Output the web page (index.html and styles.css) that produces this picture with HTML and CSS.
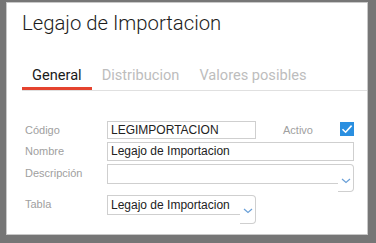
FILE: index.html
```html
<!DOCTYPE html>
<html lang="es">
<head>
    <meta charset="UTF-8">
    <title>Legajo de Importacion</title>
    <link rel="stylesheet" href="styles.css">
</head>
<body>
    <div class="dialog">
        <h1 class="title">Legajo de Importacion</h1>

        <!-- pestañas -->
        <div class="tabs">
            <span class="tab active">General</span>
            <span class="tab">Distribucion</span>
            <span class="tab">Valores posibles</span>
        </div>

        <div class="form">
            <div class="row">
                <label class="label">Código</label>
                <div class="input short">LEGIMPORTACION</div>
                <span class="label activo">Activo</span>
                <span class="check">
                    <svg width="14" height="14" viewBox="0 0 14 14">
                        <path d="M2.5 7.2 L5.6 10.2 L11.6 3.6" fill="none" stroke="#fff" stroke-width="1.6"/>
                    </svg>
                </span>
            </div>
            <div class="row">
                <label class="label">Nombre</label>
                <div class="input wide">Legajo de Importacion</div>
            </div>
            <div class="row">
                <label class="label">Descripción</label>
                <div class="combo wide">
                    <div class="combo-field"></div>
                    <div class="combo-btn">
                        <svg width="10" height="6" viewBox="0 0 10 6"><path d="M1 1 L5 4.5 L9 1" fill="none" stroke="#6aa0d8" stroke-width="1.2"/></svg>
                    </div>
                </div>
            </div>
            <div class="row tabla">
                <label class="label">Tabla</label>
                <div class="combo short">
                    <div class="combo-field">Legajo de Importacion</div>
                    <div class="combo-btn">
                        <svg width="10" height="6" viewBox="0 0 10 6"><path d="M1 1 L5 4.5 L9 1" fill="none" stroke="#6aa0d8" stroke-width="1.2"/></svg>
                    </div>
                </div>
            </div>
        </div>
    </div>
</body>
</html>
```

FILE: styles.css
```css
body {
    margin: 0;
    background: #767676;
    font-family: 'Liberation Sans', Arial, sans-serif;
}
.dialog {
    margin: 2px 8px 0 6px;
    height: 231px;
    background: #fff;
    border: 1px solid #c8c8c8;
}
.title {
    margin: 0;
    padding: 7px 0 0 15px;
    font-family: Roboto, sans-serif;
    font-weight: 300;
    font-size: 20.3px;
    line-height: 26px;
    color: #1c1c1c;
}
.tabs {
    display: flex;
    margin: 27px 0 0 15px;
    border-bottom: 1px solid #e0e0e0;
}
.tab {
    padding: 0 10px;
    font-family: Roboto, sans-serif;
    font-size: 14.6px;
    line-height: 24px;
    color: #bdbdbd;
    border-bottom: 3px solid transparent;
}
.tab.active {
    color: #1a1a1a;
    border-bottom-color: #e5432f;
}
.form {
    padding: 30px 0 0 18px;
    display: flex;
    flex-direction: column;
    gap: 3px;
}
.row {
    display: flex;
    align-items: flex-start;
}
.label {
    width: 82px;
    font-size: 11px;
    line-height: 18px;
    color: #a0a0a0;
}
.input {
    border: 1px solid #cfcfcf;
    font-size: 12px;
    line-height: 16px;
    padding: 0 3px;
    color: #222;
}
.short {
    width: 149px;
    box-sizing: border-box;
}
.input.short {
    height: 18px;
}
.wide {
    width: 247px;
    box-sizing: border-box;
}
.input.wide {
    height: 19px;
}
.activo {
    width: auto;
    margin: 0 0 0 27px;
}
.check {
    margin: 1px 0 0 27px;
    width: 14px;
    height: 14px;
    background: #2a8fe0;
    display: flex;
}
.combo {
    display: flex;
    align-items: flex-start;
}
.combo-field {
    flex: 1;
    height: 18px;
    border: 1px solid #cfcfcf;
    border-right: none;
    font-size: 12px;
    line-height: 18px;
    padding: 0 3px;
    color: #222;
}
.combo-btn {
    width: 16px;
    height: 28px;
    border: 1px solid #cfcfcf;
    border-left: none;
    border-radius: 0 4px 4px 0;
    display: flex;
    align-items: flex-start;
    justify-content: center;
    padding-top: 13px;
    box-sizing: border-box;
    margin-left: -1px;
    background: #fff;
}
.row.tabla .combo-btn {
    height: 29px;
    padding-top: 12px;
}
```
